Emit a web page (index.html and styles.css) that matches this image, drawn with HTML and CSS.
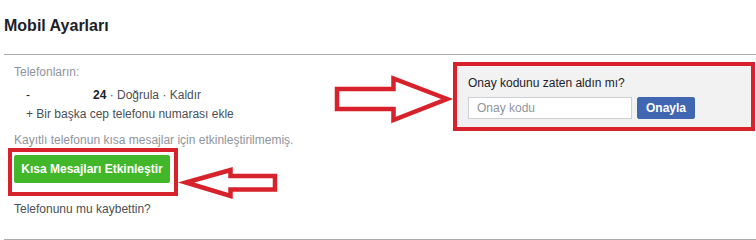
FILE: index.html
```html
<!DOCTYPE html>
<html lang="tr">
<head>
<meta charset="utf-8">
<title>Mobil Ayarları</title>
<link rel="stylesheet" href="styles.css">
</head>
<body>
<div class="screen">
  <div class="page">
    <header class="head">
      <h1 class="title">Mobil Ayarları</h1>
    </header>
    <section class="settings">
      <div class="left">
        <p class="label">Telefonların:</p>
        <div class="phones">
          <div class="phone"><span class="phone-num">-</span><b class="phone-end">24</b><span class="actions"> · Doğrula · Kaldır</span></div>
          <div class="add">+ Bir başka cep telefonu numarası ekle</div>
        </div>
        <p class="label notice">Kayıtlı telefonun kısa mesajlar için etkinleştirilmemiş.</p>
        <div class="highlight"><button class="btn-green" type="button">Kısa Mesajları Etkinleştir</button></div>
        <a class="lost">Telefonunu mu kaybettin?</a>
      </div>
      <div class="confirm">
        <div class="question">Onay kodunu zaten aldın mı?</div>
        <div class="form-row">
          <input class="code" type="text" placeholder="Onay kodu">
          <button class="btn-blue" type="button">Onayla</button>
        </div>
      </div>
    </section>
  </div>
  <svg class="annot" width="756" height="240" viewBox="0 0 756 240">
    <polygon points="186,182.5 230.5,170 230.5,176 275,176 275,189.5 230.5,189.5 230.5,196" fill="none" stroke="#d7212b" stroke-width="4.5" stroke-linejoin="miter"/>
    <polygon points="337,89 393.5,89 393.5,78.5 447,99 393.5,120 393.5,109 337,109" fill="none" stroke="#d7212b" stroke-width="4.5" stroke-linejoin="miter"/>
  </svg>
</div>
</body>
</html>
```
FILE: styles.css
```css
* { box-sizing: border-box; }
html, body { margin: 0; padding: 0; background: #fff; }
body {
  font-family: "Liberation Sans", Arial, sans-serif;
  font-size: 12px;
  color: #1d2129;
}
.screen {
  position: relative;
  width: 756px;
  height: 240px;
  overflow: hidden;
}
.page {
  margin-left: 4px;
}
.head {
  padding: 16px 0 18px 0;
  border-bottom: 1px solid #ababab;
}
.title {
  margin: 0;
  font-size: 16px;
  line-height: 20px;
  font-weight: bold;
  color: #1d2129;
}
.settings {
  display: flex;
  justify-content: space-between;
  align-items: flex-start;
  border-bottom: 1px solid #ababab;
}
.left {
  padding: 9px 0 22px 10px;
}
.label {
  margin: 0;
  line-height: 16px;
  color: #90949c;
}
.phones {
  margin-top: 7px;
  padding-left: 12px;
  line-height: 16px;
}
.phone { color: #4b4f56; }
.phone-num {
  display: inline-block;
  width: 67px;
  color: #1d2129;
}
.phone-end { color: #1d2129; font-weight: bold; }
.add {
  margin-top: 3px;
  color: #4b4f56;
}
.notice { margin-top: 10px; }
.highlight {
  width: 170px;
  margin-left: -6px;
  border: 4px solid #d7212b;
  padding: 3px 4px 9px 2px;
}
.btn-green {
  display: block;
  width: 156px;
  height: 28px;
  margin: 0;
  padding: 0;
  border: 1px solid #42b72a;
  border-radius: 2px;
  background: #42b72a;
  color: #fff;
  font-family: inherit;
  font-size: 12px;
  font-weight: bold;
  text-align: center;
}
.lost {
  display: block;
  margin-top: 5px;
  line-height: 16px;
  color: #4b4f56;
}
.confirm {
  width: 302px;
  margin-top: 7px;
  margin-right: 1px;
  border: 4px solid #d7212b;
  background: #f2f2f2;
  padding: 9px 11px 8px 11px;
}
.question {
  line-height: 16px;
  color: #1d2129;
}
.form-row {
  display: flex;
  margin-top: 6px;
}
.code {
  width: 164px;
  height: 22px;
  margin: 0;
  padding: 0 8px;
  border: 1px solid #ccd0d5;
  background: #fff;
  font-family: inherit;
  font-size: 12px;
  color: #1d2129;
}
.code::placeholder { color: #90949c; }
.btn-blue {
  width: 58px;
  height: 22px;
  margin: 0 0 0 5px;
  padding: 0;
  border: 1px solid #4267b2;
  border-radius: 2px;
  background: #4267b2;
  color: #fff;
  font-family: inherit;
  font-size: 12px;
  font-weight: bold;
}
.annot {
  position: absolute;
  left: 0;
  top: 0;
  pointer-events: none;
}
```
